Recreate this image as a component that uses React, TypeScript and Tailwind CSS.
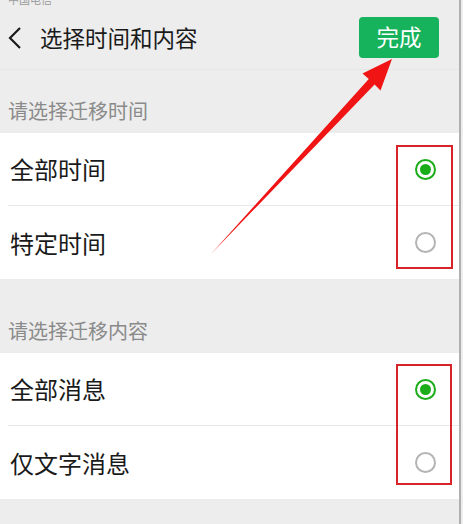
import React from 'react';

const font = { fontFamily: '"Noto Sans CJK SC", "Noto Sans", sans-serif' };

function Radio({ checked }: { checked: boolean }) {
  return checked ? (
    <div className="w-[21px] h-[21px] rounded-full border-2 border-[#1aad19] flex items-center justify-center">
      <div className="w-[11px] h-[11px] rounded-full bg-[#1aad19]" />
    </div>
  ) : (
    <div className="w-[21px] h-[21px] rounded-full border-2 border-[#b4b4b4]" />
  );
}

function Section({ label, items, last }: { label: string; items: { text: string; checked: boolean }[]; last?: boolean }) {
  return (
    <div>
      <div className="h-[63px] flex items-center pl-2 pt-[18px] text-[20px] text-[#8a8a8a]">{label}</div>
      <div className="bg-white">
        {items.map((item, i) => (
          <div key={item.text} className={`ml-2 h-[73px] flex items-center justify-between pr-[23px] ${i === 0 ? 'border-b border-[#e8e8e8]' : ''}`}>
            <span className="text-[24px] text-[#1a1a1a] pl-[2px]">{item.text}</span>
            <Radio checked={item.checked} />
          </div>
        ))}
      </div>
      {!last && <div className="h-[11px]" />}
    </div>
  );
}

export default function App() {
  return (
    <div className="relative w-[463px] h-[524px] overflow-hidden bg-[#ededed]" style={font}>
      <div className="w-[461px] h-full border-r-2 border-[#b0b0b0]">
        {/* status bar, mostly cut off */}
        <div className="h-[6px] overflow-hidden pl-2 flex items-end">
          <span className="text-[11px] leading-[11px] text-[#9a9a9a] translate-y-[-1px]">中国电信</span>
        </div>
        {/* header */}
        <div className="h-[64px] flex items-center justify-between border-b border-[#e6e6e6] pr-[20px]">
          <div className="flex items-center">
            <svg width="20" height="26" viewBox="0 0 20 26" className="ml-[5px]">
              <path d="M15 3 L5 13 L15 23" fill="none" stroke="#1a1a1a" strokeWidth="2.2" />
            </svg>
            <span className="ml-[15px] text-[22.5px] text-[#1a1a1a]">选择时间和内容</span>
          </div>
          <div className="w-[80px] h-[41px] rounded-[4px] bg-[#16b35c] text-white text-[22.5px] flex items-center justify-center mt-[-1px]">
            完成
          </div>
        </div>
        <Section
          label="请选择迁移时间"
          items={[
            { text: '全部时间', checked: true },
            { text: '特定时间', checked: false },
          ]}
        />
        <Section
          label="请选择迁移内容"
          last
          items={[
            { text: '全部消息', checked: true },
            { text: '仅文字消息', checked: false },
          ]}
        />
      </div>

      {/* annotations */}
      <div className="absolute left-[396px] top-[145px] w-[57px] h-[124px] border-2 border-[#d9232a]" />
      <div className="absolute left-[396px] top-[364px] w-[56px] h-[121px] border-2 border-[#d9232a]" />
      <svg className="absolute left-0 top-0" width="463" height="524" viewBox="0 0 463 524">
        <polygon
          points="392,59 362.5,73.5 368.8,79 211,254 374.6,84.4 380.5,90.5"
          fill="#f01414"
        />
      </svg>
    </div>
  );
}
